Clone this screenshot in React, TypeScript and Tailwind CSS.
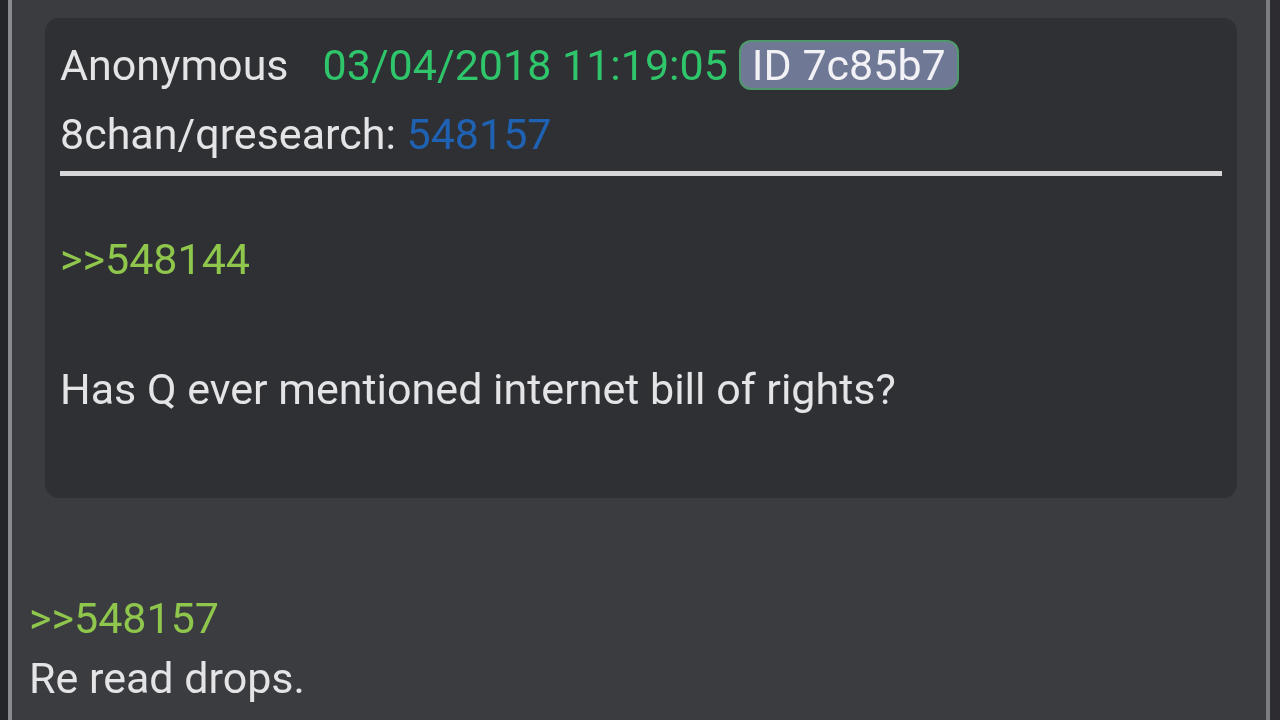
const App: React.FC = () => {
  return (
    <div
      className="flex h-[720px] w-[1280px] overflow-hidden bg-[#3b3c40] text-[43px] leading-[48px] text-[#e4e4e6] blur-[0.6px]"
      style={{ fontFamily: "Roboto, 'Liberation Sans', sans-serif" }}
    >
      {/* left edge */}
      <div className="w-[8px] bg-[#25262a]" />
      <div className="w-[4px] bg-[#8a8b8f]" />

      {/* main column */}
      <div className="flex flex-1 flex-col pt-[18px] pl-[33px] pr-[29px]">
        <div className="rounded-[14px] bg-[#2f3034] pt-[22px] pl-[15px] pr-[15px] pb-[85px]">
          <div className="flex h-[50px] items-center">
            <span>Anonymous</span>
            <span className="ml-[34px] text-[#2fc66b]">03/04/2018 11:19:05</span>
            <span className="ml-[11px] flex h-[50px] items-center rounded-[12px] border-2 border-[#4f9a6c] bg-[#6f7894] px-[11px] text-[#f2f2f6]">
              ID 7c85b7
            </span>
          </div>
          <div className="mt-[20px]">
            8chan/qresearch: <span className="text-[#1f62b3]">548157</span>
          </div>
          <div className="mt-[13px] h-[5px] bg-[#d6d6d8]" />
          <div className="mt-[59px] text-[#8fc64c]">&gt;&gt;548144</div>
          <div className="mt-[82px]">Has Q ever mentioned internet bill of rights?</div>
        </div>

        <div className="mt-[96px] -ml-[16px] text-[#8fc64c]">&gt;&gt;548157</div>
        <div className="mt-[12px] -ml-[16px]">Re read drops.</div>
      </div>

      {/* right edge */}
      <div className="w-[4px] bg-[#7c7d82]" />
      <div className="w-[10px] bg-[#2d2d31]" />
    </div>
  );
};

export default App;
